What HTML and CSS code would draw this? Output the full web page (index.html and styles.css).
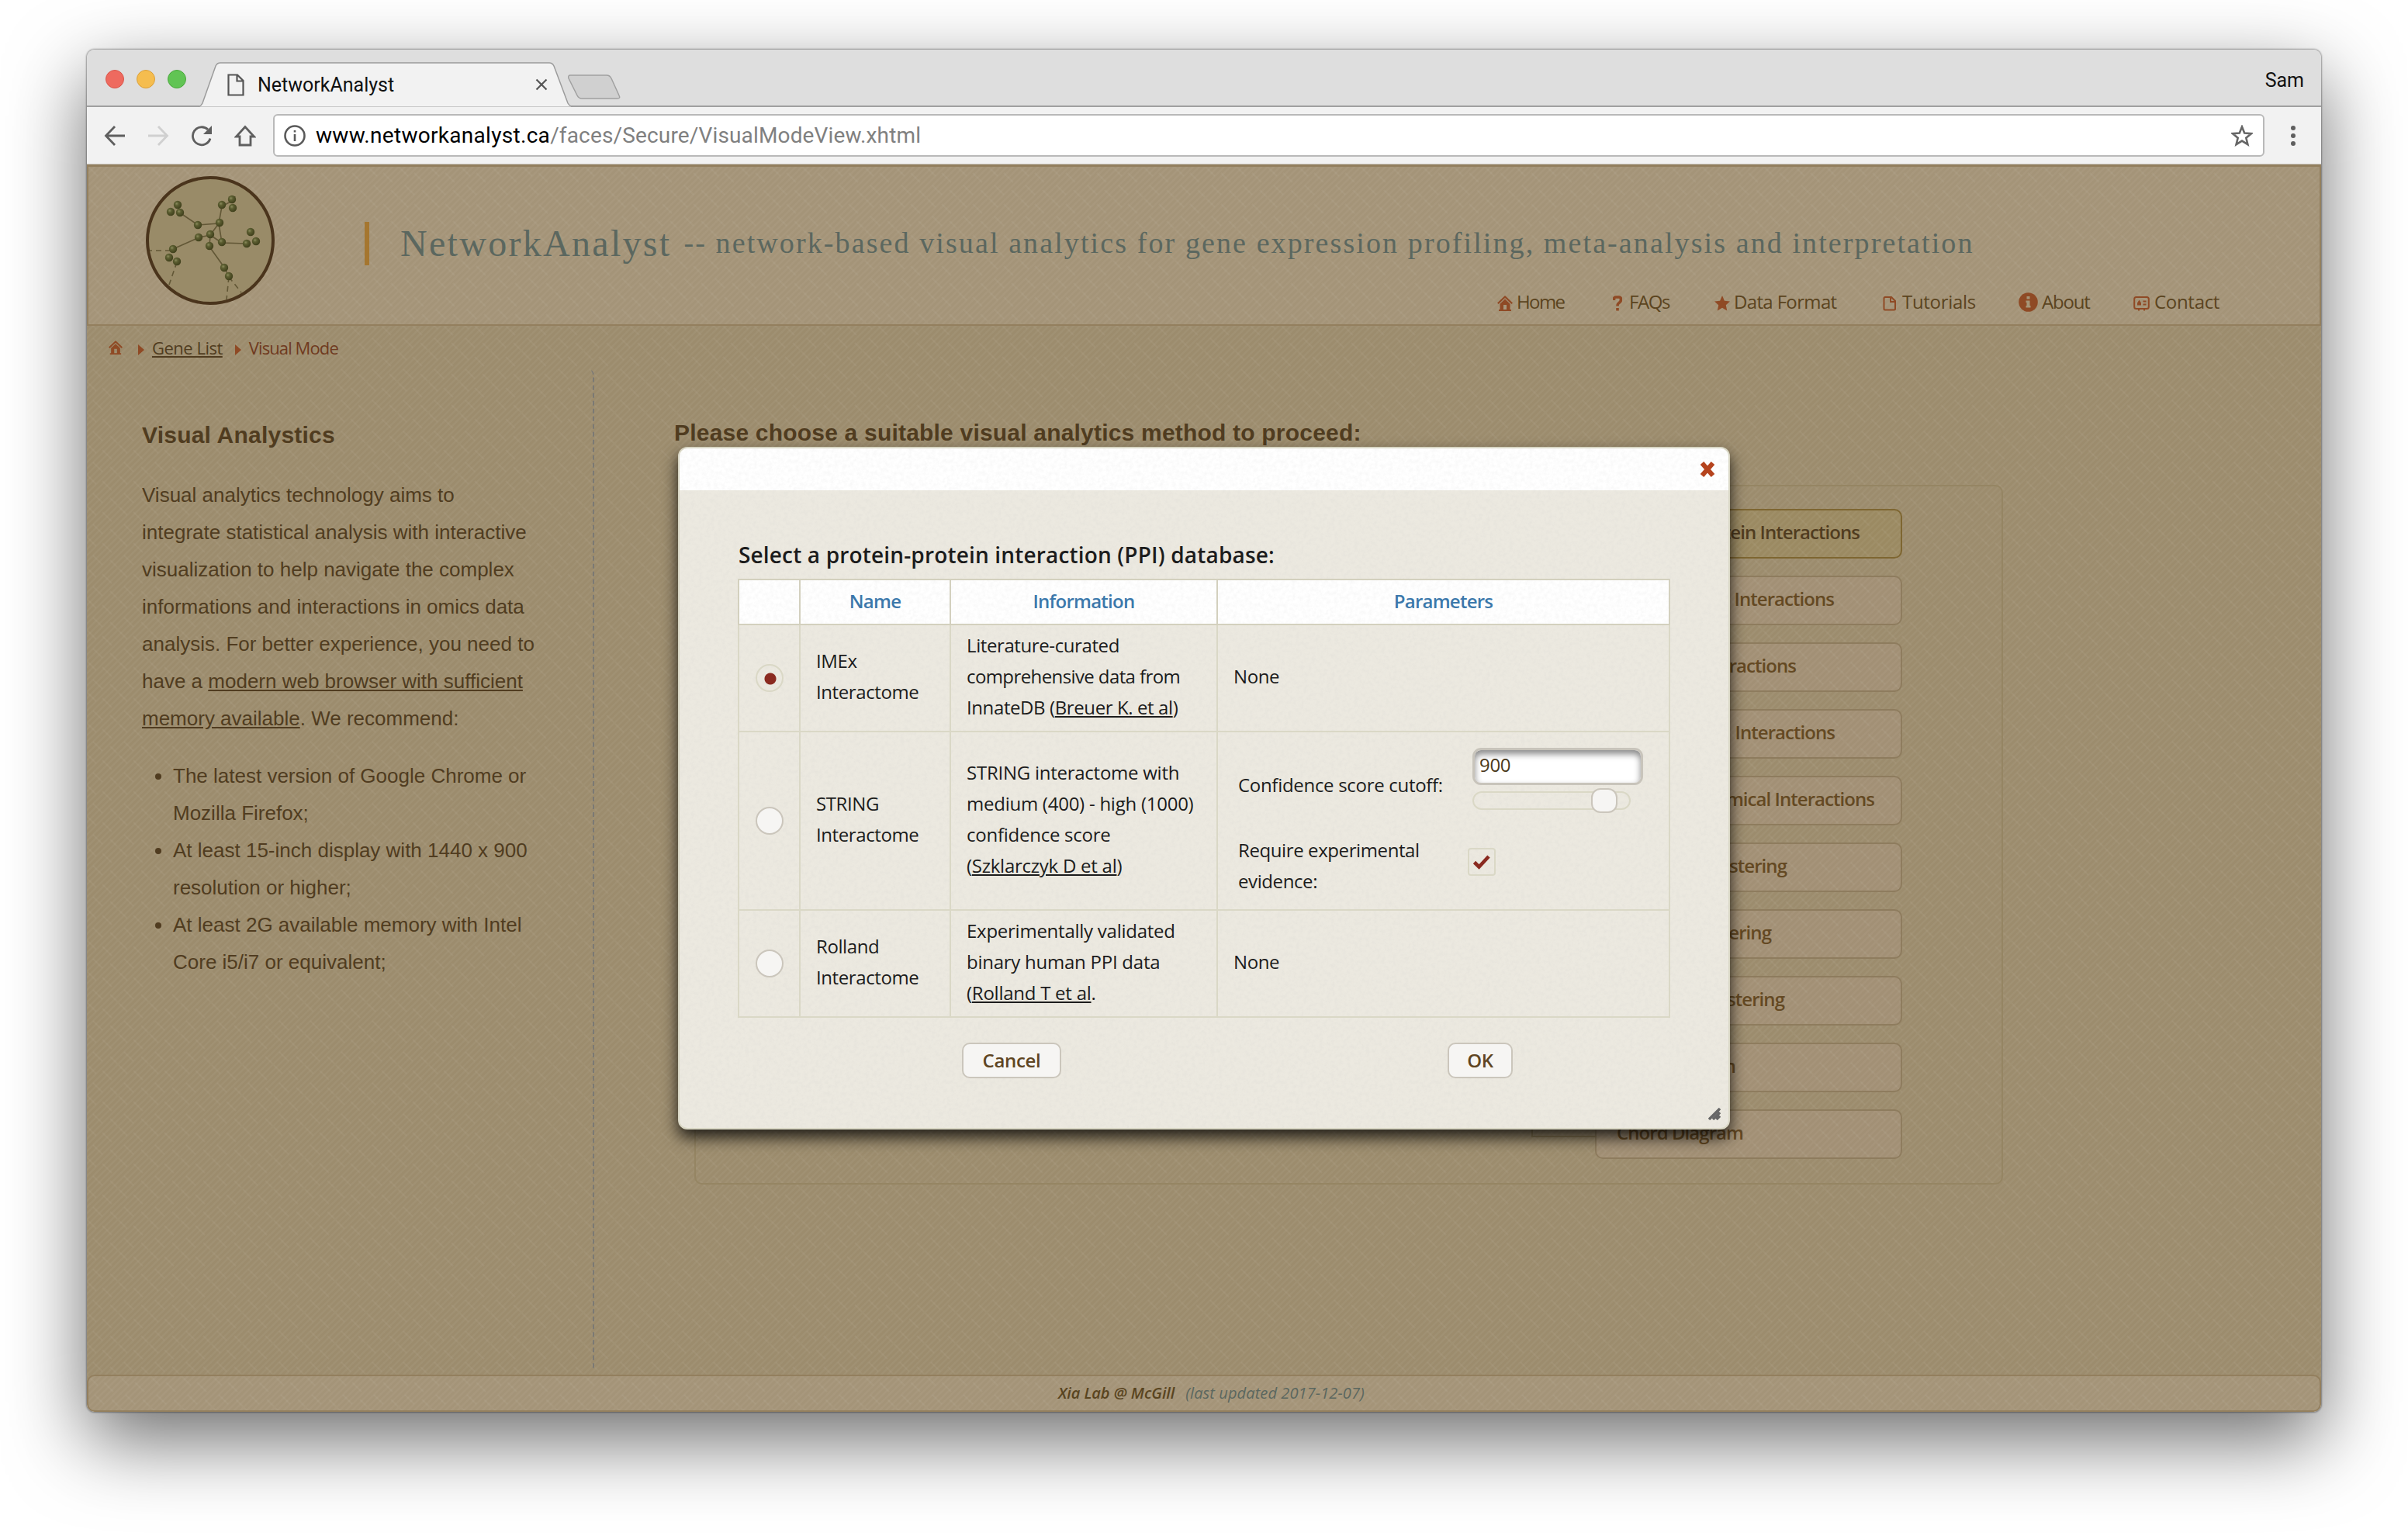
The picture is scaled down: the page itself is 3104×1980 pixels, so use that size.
FILE: index.html
```html
<!DOCTYPE html>
<html lang="en">
<head>
<meta charset="utf-8">
<title>NetworkAnalyst</title>
<link rel="stylesheet" href="styles.css">
</head>
<body>
<svg class="defs" width="0" height="0" aria-hidden="true">
  <defs>
    <radialGradient id="ball" cx=".38" cy=".36" r=".65">
      <stop offset="0" stop-color="#8a8b5c"/><stop offset=".35" stop-color="#5c5e31"/><stop offset="1" stop-color="#3f3f1b"/>
    </radialGradient>
    <symbol id="i-house" viewBox="0 0 20 20"><path d="M10 0 20 9.5l-1.6 1.6L10 3 1.600 11.100 0 9.500zM10 4.600l6.500 6.200V18H18v2H2v-2h1.500v-7.200zM8 12v6h4v-6z" fill="currentColor" fill-rule="evenodd"/></symbol>
  </defs>
</svg>
<div class="window">
  <div class="tabstrip">
    <div class="lights"><i class="red"></i><i class="amber"></i><i class="green"></i></div>
    <div class="tab">
      <svg class="tab-shape" width="560" height="58" viewBox="0 0 560 58"><path d="M0 57.500C3 57 4 55 5 53L22 5Q24 1 28 1H452Q456 1 458 5L476 53Q478 57 482 57.500" fill="#f2f2f2" stroke="#9b9b9b" stroke-width="1.500"/><path d="M479 17H526Q530 17 532 21L542 43Q544 47 540 47H494Q490 47 488 43L477 21Q476 17 479 17Z" fill="#d0d0d0" stroke="#a0a0a0" stroke-width="1.500"/></svg>
      <svg class="tab-file" width="22" height="29" viewBox="0 0 22 29"><path d="M1.500 1.500H13L20.500 9V27.500H1.500ZM12.500 1.500V9.500H20.500" fill="none" stroke="#555" stroke-width="2.200"/></svg>
      <span class="tab-title">NetworkAnalyst</span>
      <svg class="tab-x" width="16" height="16" viewBox="0 0 16 16"><path d="M1.500 1.500 14.500 14.500M14.500 1.500 1.500 14.500" stroke="#555" stroke-width="2.200"/></svg>
    </div>
    <span class="user">Sam</span>
  </div>
  <div class="toolbar">
    <svg class="tb back" width="28" height="28" viewBox="0 0 28 28"><path d="M27 14H3M14 2 2.500 14 14 26" fill="none" stroke="#5f5f5f" stroke-width="2.800"/></svg>
    <svg class="tb fwd" width="28" height="28" viewBox="0 0 28 28"><path d="M1 14H25M14 2 25.500 14 14 26" fill="none" stroke="#d0d0d0" stroke-width="2.800"/></svg>
    <svg class="tb reload" width="28" height="28" viewBox="0 0 28 28"><path d="M25 17.500A11.500 11.500 0 1 1 22 6" fill="none" stroke="#5f5f5f" stroke-width="2.800"/><path d="M27 1V12H16Z" fill="#5f5f5f"/></svg>
    <svg class="tb home" width="28" height="28" viewBox="0 0 28 28"><path d="M14 2.500 2.500 15H7V26H21V15H25.500Z" fill="none" stroke="#5f5f5f" stroke-width="2.800"/></svg>
    <div class="omnibox">
      <svg class="info" width="28" height="28" viewBox="0 0 28 28"><circle cx="14" cy="14" r="12.500" fill="none" stroke="#5a5a5a" stroke-width="2.600"/><path d="M14 12V21M14 7V9.600" stroke="#5a5a5a" stroke-width="2.600"/></svg>
      <span class="url"><span class="host">www.networkanalyst.ca</span><span class="path">/faces/Secure/VisualModeView.xhtml</span></span>
      <svg class="star" width="28" height="28" viewBox="0 0 28 28"><path d="M14 2.500 17.200 10.500 26 11.200 19.300 16.800 21.400 25.200 14 20.600 6.600 25.200 8.700 16.800 2 11.200 10.800 10.500Z" fill="none" stroke="#666" stroke-width="2.600"/></svg>
    </div>
    <div class="menu"><i></i><i></i><i></i></div>
  </div>

  <div class="page">
    <header class="header">
      <svg class="logo" width="168" height="168" viewBox="0 0 168 168">
        <circle cx="84" cy="84" r="81" fill="#998b68" stroke="#4a341c" stroke-width="4"/>
        <g fill="none" stroke="#625736" stroke-width="1.600">
          <path d="M46 49 68 64 95 62 99 40 112 33M95 62 99 87 131 88M95 62 84 77 70 80 36 95M84 77 99 87M84 77 83 92 103 120 108 131"/>
          <path d="M112 33 118 24M33 97H6M41 112 31 141M108 131 124 151M108 131 105 160" stroke-dasharray="7 5"/>
        </g>
        <g fill="url(#ball)">
          <circle cx="42" cy="38" r="5.200"/><circle cx="33" cy="47" r="5.200"/><circle cx="45" cy="48" r="5.200"/>
          <circle cx="68" cy="64" r="5.200"/><circle cx="96" cy="61" r="5.200"/><circle cx="99" cy="38" r="5.200"/>
          <circle cx="112" cy="31" r="5.200"/><circle cx="113" cy="42" r="5.200"/><circle cx="84" cy="76" r="5.200"/>
          <circle cx="69" cy="80" r="5.200"/><circle cx="83" cy="91" r="5.200"/><circle cx="99" cy="86" r="5.200"/>
          <circle cx="136" cy="73" r="5.200"/><circle cx="131" cy="88" r="5.200"/><circle cx="143" cy="85" r="5.200"/>
          <circle cx="36" cy="95" r="5.200"/><circle cx="31" cy="106" r="5.200"/><circle cx="41" cy="111" r="5.200"/>
          <circle cx="102" cy="119" r="5.200"/><circle cx="108" cy="130" r="5.200"/>
        </g>
      </svg>
      <div class="brand">
        <h1><span class="name">NetworkAnalyst</span><span class="tag">-- network-based visual analytics for gene expression profiling, meta-analysis and interpretation</span></h1>
        <nav class="nav">
          <a class="n1"><svg width="20" height="20"><use href="#i-house"/></svg>Home</a>
          <a class="n2"><svg width="12" height="20" viewBox="0 0 12 20"><path d="M1.500 6V3.500Q2 2 4 2H8Q10.500 2 10.500 5T8 9.500Q6 10.500 6 13.500M6 16v3.500" fill="none" stroke="currentColor" stroke-width="3.600"/></svg>FAQs</a>
          <a class="n3"><svg width="20" height="20" viewBox="0 0 20 20"><path d="M10 0 12.900 6.800 20 7.500 14.800 12.300 16.200 19.500 10 15.800 3.800 19.500 5.200 12.300 0 7.500 7.100 6.800Z" fill="currentColor"/></svg>Data Format</a>
          <a class="n4"><svg width="18" height="20" viewBox="0 0 18 20"><path d="M3 2H11L16 7V17Q16 18.500 14.500 18.500H3Q1.500 18.500 1.500 17V3.500Q1.500 2 3 2ZM10 2V8H16" fill="none" stroke="currentColor" stroke-width="2"/></svg>Tutorials</a>
          <a class="n5"><svg width="25" height="25" viewBox="0 0 25 25"><circle cx="12.500" cy="12.500" r="12.300" fill="currentColor"/><path d="M10.500 5h4v3.500h-4zM9.500 10.500h5V17h1v2.500h-6V17h1v-4h-1z" fill="#a69679"/></svg>About</a>
          <a class="n6"><svg width="21" height="20" viewBox="0 0 21 20"><rect x="1.200" y="2" width="18.600" height="15" rx="2.500" fill="none" stroke="currentColor" stroke-width="2"/><path d="M5 12.500V9.500L7.500 5.500 10 9.500V12.500ZM12.500 6.500h4v2h-4zM12.500 10.500h4v2h-4zM6 16h2v3.500H6zM13 16h2v3.500h-2z" fill="currentColor"/></svg>Contact</a>
        </nav>
      </div>
    </header>

    <div class="crumbs">
      <svg class="c-home" width="18" height="18"><use href="#i-house"/></svg>
      <i class="arrow"></i><a class="c-link">Gene List</a>
      <i class="arrow second"></i><span class="c-here">Visual Mode</span>
    </div>

    <div class="columns">
      <aside class="side">
        <h2>Visual Analystics</h2>
        <p>Visual analytics technology aims to<br>integrate statistical analysis with interactive<br>visualization to help navigate the complex<br>informations and interactions in omics data<br>analysis. For better experience, you need to<br>have a <u>modern web browser with sufficient</u><br><u>memory available</u>. We recommend:</p>
        <ul>
          <li>The latest version of Google Chrome or<br>Mozilla Firefox;</li>
          <li>At least 15-inch display with 1440 x 900<br>resolution or higher;</li>
          <li>At least 2G available memory with Intel<br>Core i5/i7 or equivalent;</li>
        </ul>
      </aside>
      <main class="main">
        <h3>Please choose a suitable visual analytics method to proceed:</h3>
        <div class="panel">
          <div class="methods">
            <button class="m on" style="padding-right:53px">Protein Interactions</button>
            <button class="m" style="padding-right:86px">Interactions</button>
            <button class="m" style="padding-right:135px">Interactions</button>
            <button class="m" style="padding-right:85px">Interactions</button>
            <button class="m" style="padding-right:34px">Chemical Interactions</button>
            <button class="m" style="padding-right:147px">Clustering</button>
            <button class="m" style="padding-right:167px">Clustering</button>
            <button class="m" style="padding-right:150px">Clustering</button>
            <button class="m" style="padding-right:213px">Venn Diagram</button>
            <button class="m last" style="padding-right:203px">Chord Diagram</button>
          </div>
        </div>
      </main>
    </div>

    <footer class="footer"><b>Xia Lab @ McGill</b><em>(last updated 2017-12-07)</em></footer>
  </div>

  <section class="dialog">
    <div class="d-bar"><svg width="20" height="20" viewBox="0 0 20 20"><path d="M3 2 17 18M17 2 3 18" stroke="#b5431d" stroke-width="6"/></svg></div>
    <div class="d-body">
      <h4>Select a protein-protein interaction (PPI) database:</h4>
      <table class="grid">
        <colgroup><col class="w1"><col class="w2"><col class="w3"><col class="w4"></colgroup>
        <tr class="head"><th></th><th>Name</th><th>Information</th><th>Parameters</th></tr>
        <tr class="r1"><td class="pick"><i class="radio checked"></i></td><td>IMEx<br>Interactome</td><td>Literature-curated<br><span class="tight">comprehensive data from</span><br>InnateDB (<u>Breuer K. et al</u>)</td><td>None</td></tr>
        <tr class="r2"><td class="pick"><i class="radio"></i></td><td>STRING<br>Interactome</td><td class="loose">STRING interactome with<br>medium (400) - high (1000)<br>confidence score<br>(<u>Szklarczyk D et al</u>)</td>
          <td class="params">
            <div class="p-row"><label>Confidence score cutoff:</label><div class="score"><div class="input">900</div><div class="slider"><i></i></div></div></div>
            <div class="p-row two"><label>Require experimental<br>evidence:</label><span class="check"><svg width="26" height="22" viewBox="0 0 26 22"><path d="M3.500 11.500 9.500 17.500 22 4" fill="none" stroke="#8a2a20" stroke-width="4.600"/></svg></span></div>
          </td></tr>
        <tr class="r3"><td class="pick"><i class="radio"></i></td><td>Rolland<br>Interactome</td><td class="loose">Experimentally validated<br>binary human PPI data<br>(<u>Rolland T et al</u>.</td><td>None</td></tr>
      </table>
      <div class="actions"><button class="btn cancel">Cancel</button><button class="btn ok">OK</button></div>
    </div>
    <svg class="grip" width="16" height="16" viewBox="0 0 16 16"><path d="M1 15 15 1M6 15 15 6M10.500 15 15 10.500" stroke="#666" stroke-width="3.400"/></svg>
  </section>
</div>
</body>
</html>
```
FILE: styles.css
```css
* { box-sizing: border-box; }
body { margin: 0; width: 3104px; height: 1980px; overflow: hidden; background: #fff; font-family: "Open Sans", sans-serif; white-space: nowrap; }
i { font-style: normal; }
button { font: inherit; margin: 0; }
.defs { position: absolute; }

.window { position: relative; width: 2880px; height: 1756px; margin: 64px 112px; border-radius: 10px; display: flex; flex-direction: column; box-shadow: 0 36px 100px rgba(0,0,0,.58), 0 0 2px 1px rgba(0,0,0,.35); }

/* browser chrome */
.tabstrip { height: 74px; flex: none; display: flex; align-items: flex-start; background: #dedede; border-bottom: 2px solid #a0a0a0; border-radius: 10px 10px 0 0; font-family: Roboto, sans-serif; font-size: 25px; }
.lights { display: flex; gap: 16px; padding: 26px 0 0 24px; width: 144px; }
.lights i { width: 24px; height: 24px; border-radius: 50%; border: 1px solid #d9564b; background: #ee6a5f; flex: none; }
.lights .amber { background: #f5bd4f; border-color: #dba03a; }
.lights .green { background: #61c454; border-color: #4ba83e; }
.tab { position: relative; width: 560px; height: 58px; margin-top: 16px; display: flex; align-items: center; padding-left: 37px; }
.tab-shape { position: absolute; left: 0; top: 0; }
.tab-file { position: relative; }
.tab-title { position: relative; width: 352px; margin-left: 17px; color: #111; }
.tab-x { position: relative; margin-left: 6px; }
.user { margin: 26px 22px 0 auto; line-height: 28px; color: #111; }
.toolbar { height: 74px; flex: none; display: flex; align-items: center; background: #f2f2f2; padding-left: 22px; border-bottom: 1px solid #c9c6c0; }
.tb { flex: none; margin-right: 28px; }
.tb.home { margin-right: 22px; }
.omnibox { width: 2567px; height: 55px; display: flex; align-items: center; background: #fff; border: 2px solid #b9b9b9; border-radius: 6px; padding: 0 13px 0 12px; font: 28px Roboto, sans-serif; color: #000; }
.url { margin-left: 13px; letter-spacing: .15px; }
.host { letter-spacing: .3px; }
.path { color: #808080; }
.star { margin-left: auto; }
.menu { margin-left: 34px; display: flex; flex-direction: column; gap: 4px; }
.menu i { width: 6px; height: 6px; border-radius: 50%; background: #5f5f5f; }

/* web page under the modal overlay */
.page { --weave: url("data:image/svg+xml,%3Csvg xmlns='http://www.w3.org/2000/svg' width='40' height='40'%3E%3Cg stroke='%23fff' stroke-opacity='.04' stroke-width='2.400'%3E%3Cpath d='M-2 10 10-2M-2 18 18-2M-2 26 26-2M-2 34 34-2M-2 42 42-2M6 42 42 6M14 42 42 14M22 42 42 22M30 42 42 30'/%3E%3C/g%3E%3Cpath d='M0 0 12 12M20 8 32 20M8 24 20 36M30 30 40 40' stroke='%23fff' stroke-opacity='.04' stroke-width='2'/%3E%3C/svg%3E"); flex: 1; display: flex; flex-direction: column; background: var(--weave) #9c8c6d; border-radius: 0 0 10px 10px; color: #503c20; overflow: hidden; }
.header { height: 208px; flex: none; display: flex; background: var(--weave) #a49478; border: 2px solid #937f5e; border-top-width: 3px; padding-left: 73px; }
.logo { margin-top: 11px; flex: none; }
.brand { flex: 1; padding: 71px 0 0 115px; }
h1 { margin: 0; height: 56px; display: flex; align-items: flex-start; border-left: 6px solid #a5762f; padding-left: 40px; font: 48px/56px "Liberation Serif", serif; color: #5b675f; }
.name { letter-spacing: 2.3px; }
.tag { font-size: 38px; letter-spacing: 2.1px; margin-left: 16px; line-height: 55px; }
.nav { position: relative; display: flex; height: 40px; margin-top: 27px; font-size: 24px; line-height: 40px; color: #5b4420; }
.nav a { position: absolute; top: 0; display: flex; align-items: center; gap: 5px; }
.nav svg { color: #8f4a25; position: relative; top: 2px; }
.n1 { left: 1460px; letter-spacing: -1.6px; } .n2 { left: 1609px; letter-spacing: -1.4px; } .n3 { left: 1740px; letter-spacing: -.65px; }
.n4 { left: 1957px; letter-spacing: -.3px; } .n5 { left: 2132px; letter-spacing: -1.2px; } .n6 { left: 2280px; letter-spacing: -.3px; }
.nav .n2 { gap: 9px; } .nav .n4 { gap: 7px; } .nav .n6 { gap: 6px; } .nav .n5 svg { top: 0; }

.crumbs { height: 56px; flex: none; display: flex; align-items: center; padding: 0 0 1px 28px; font-size: 22px; }
.c-home { color: #8f4a25; }
.arrow { width: 0; height: 0; border: solid transparent; border-width: 7px 0 7px 8px; border-left-color: #8f4a25; margin: 6px 10px 0 20px; }
.arrow.second { margin-left: 16px; }
.c-link { text-decoration: underline; letter-spacing: -.5px; }
.c-here { color: #6f3a20; letter-spacing: -.9px; }

.columns { flex: 1; display: flex; min-height: 0; }
.side { width: 654px; height: 1290px; border-right: 2px dashed #7b7974; border-top-right-radius: 8px; padding: 65px 0 0 71px; font-family: "Liberation Sans", sans-serif; }
h2 { margin: 0; font-size: 30px; line-height: 40px; letter-spacing: .22px; }
.side p { margin: 33px 0 26px; font-size: 26px; line-height: 48px; }
.side ul { margin: 0; padding-left: 40px; font-size: 26px; line-height: 48px; }
.main { padding: 62px 0 0 103px; }
h3 { margin: 0; font: bold 30px/40px "Liberation Sans", sans-serif; letter-spacing: .2px; }
.panel { margin: 47px 0 0 26px; width: 1687px; height: 902px; border: 2px solid #958563; border-radius: 10px; display: flex; justify-content: flex-end; padding: 29px 128px 0 0; }
.methods { display: flex; flex-direction: column; gap: 22px; }
.m { position: relative; width: 396px; height: 64px; padding: 0 0 5px; text-align: right; border: 2px solid #8e7c5e; border-radius: 10px; background: var(--weave) #a29075; color: #644923; font-weight: 600; font-size: 24px; letter-spacing: -.95px; }
.m.on { background: var(--weave) #9b8a62; border-color: #7e6631; color: #503c20; }
.m.last::before { content: ""; position: absolute; left: -84px; top: 0; width: 82px; height: 32px; border: solid #8a7955; border-width: 0 0 2px 2px; }
.footer { height: 48px; flex: none; display: flex; gap: 14px; padding: 0 0 2px 1250px; align-items: center; background: var(--weave) #a49478; border: 2px solid #937f5e; border-radius: 10px; font-size: 20px; font-style: italic; }
.footer b { font-weight: 600; color: #59441f; letter-spacing: -.05px; }
.footer em { color: #5b675f; letter-spacing: .1px; }

/* modal */
.dialog { --paper: url("data:image/svg+xml,%3Csvg xmlns='http://www.w3.org/2000/svg' width='200' height='200'%3E%3Cfilter id='n' x='0' y='0' width='100%25' height='100%25'%3E%3CfeTurbulence type='fractalNoise' baseFrequency='.2' numOctaves='3' stitchTiles='stitch'/%3E%3CfeColorMatrix values='0 0 0 0 .5 0 0 0 0 .5 0 0 0 0 .5 .2 0 0 0 -.07'/%3E%3C/filter%3E%3Crect width='200' height='200' filter='url(%23n)'/%3E%3C/svg%3E"); position: absolute; left: 762px; top: 512px; width: 1356px; height: 880px; border: 2px solid #d9d7c5; border-radius: 12px; background: var(--paper) #ece9e0; box-shadow: 0 10px 20px rgba(0,0,0,.8); color: #1c1c1c; }
.d-bar { height: 54px; border-radius: 10px 10px 0 0; background: var(--paper) #fff; display: flex; justify-content: flex-end; align-items: center; padding-right: 17px; }
.d-body { padding: 63px 0 0 75px; }
h4 { margin: 0 0 11px 1px; font-size: 28px; line-height: 40px; font-weight: 600; letter-spacing: .16px; }
.grid { width: 1200px; table-layout: fixed; border-collapse: collapse; font-size: 24px; line-height: 40px; letter-spacing: -.4px; }
.w1 { width: 79px; } .w2 { width: 194px; } .w3 { width: 344px; } .w4 { width: 583px; }
.grid th { height: 58px; padding: 0 0 2px; border: 2px solid #d3d0be; background: var(--paper) #fff; color: #3b78ab; font-weight: 600; letter-spacing: -.75px; }
.grid td { padding: 0 0 4px 20px; border: 2px solid #dad8c6; }
.tight { letter-spacing: -.6px; }
.loose { letter-spacing: -.25px; }
.grid td.pick { padding: 0; }
.r1, .r3 { height: 138px; } .r2 { height: 230px; }
.radio { display: block; width: 36px; height: 36px; margin: auto; border-radius: 50%; border: 2px solid #cbc6bc; background: #f6f5f3; }
.radio.checked { border-color: #dad8c6; background: radial-gradient(circle at 17px 17px, #8a2a20 7px, transparent 8px); }
.grid td.params { padding: 20px 0 0 26px; vertical-align: top; letter-spacing: -.3px; }
.p-row { display: flex; height: 84px; line-height: 40px; }
.p-row label { width: 302px; padding-top: 28px; }
.p-row.two { margin-top: 28px; height: 80px; }
.p-row.two label { width: 296px; padding: 0; letter-spacing: -.4px; }
.input { width: 220px; height: 48px; border: 3px solid #c8c4bb; border-radius: 11px; background: #fff; box-shadow: inset 0 5px 8px #888; padding-left: 6px; line-height: 38px; color: #4a3a1c; }
.slider { width: 204px; height: 24px; margin-top: 8px; border: 2px solid #dad8c6; border-radius: 12px; padding-left: 151px; }
.slider i { display: block; width: 34px; height: 32px; margin-top: -6px; border: 2px solid #cbc6bc; border-radius: 12px; background: #f6f5f3; }
.check { width: 36px; height: 36px; margin-top: 17px; border: 2px solid #dad8c6; border-radius: 4px; display: flex; align-items: center; justify-content: center; }
.actions { display: flex; padding: 32px 0 0 289px; }
.btn { height: 46px; border: 2px solid #cbc6bc; border-radius: 10px; background: #f6f5f3; color: #5f4522; font-size: 24px; font-weight: 600; padding: 0; line-height: 38px; letter-spacing: -.3px; }
.cancel { width: 128px; } .ok { width: 84px; margin-left: 498px; }
.grip { position: absolute; right: 10px; bottom: 10px; }
```
